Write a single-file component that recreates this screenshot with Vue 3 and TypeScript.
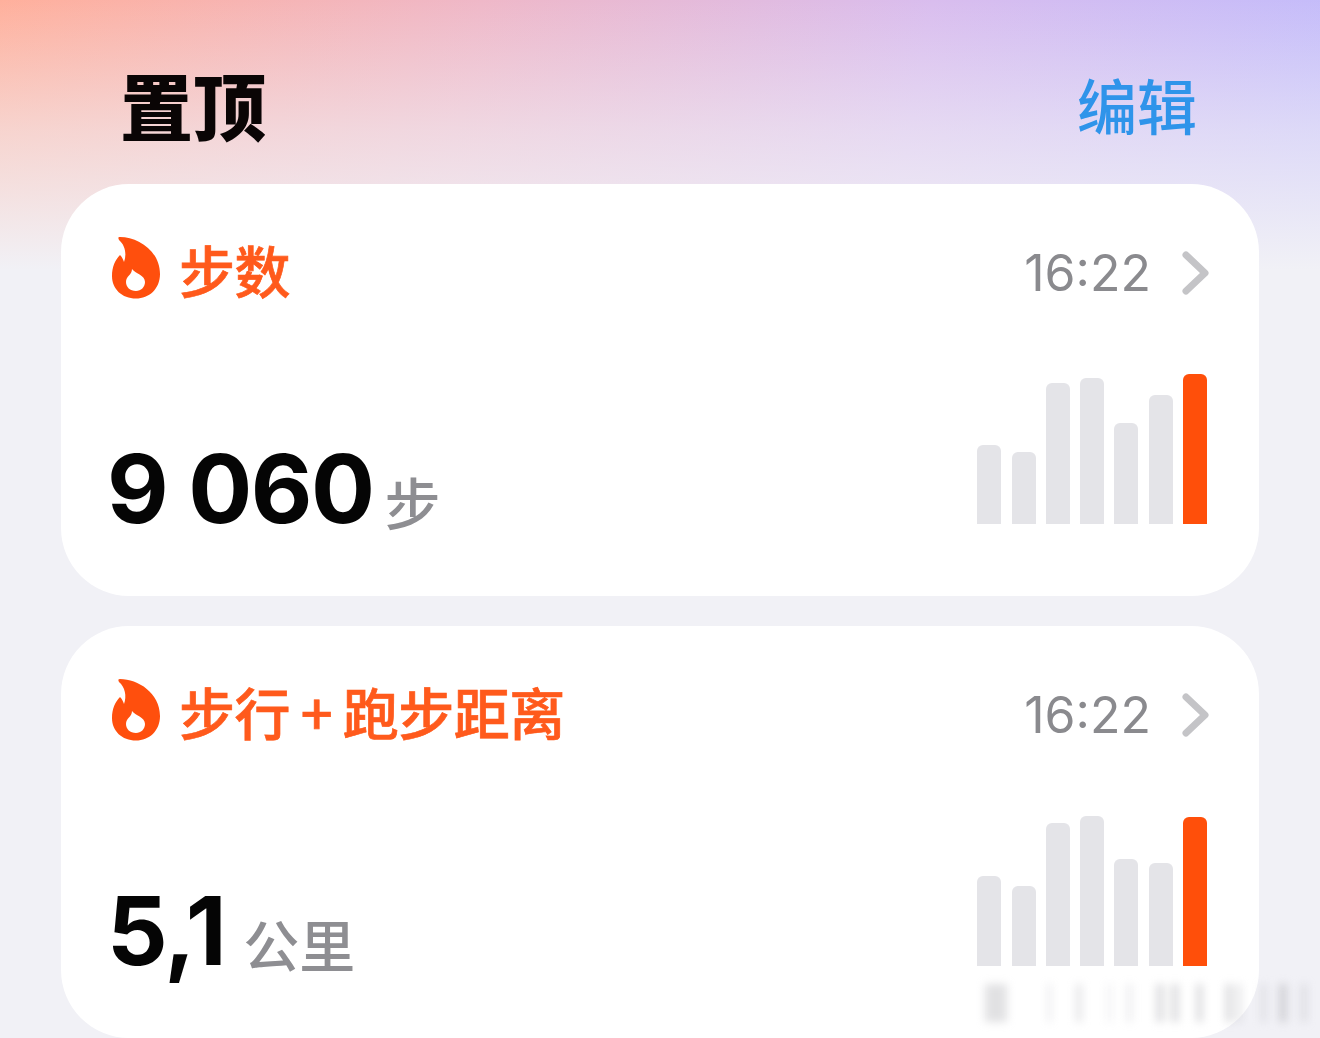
<template>
  <div class="page">
    <header class="top">
      <h1 class="title">置顶</h1>
      <span class="edit">编辑</span>
    </header>

    <section v-for="card in cards" :key="card.name" class="card">
      <div class="card-head">
        <svg class="flame" viewBox="0 0 48 62" aria-hidden="true">
          <path
            fill="#ff4f0d"
            fill-rule="evenodd"
            d="M8 0C26 0 48 14 48 37C48 52 37 61.500 24 61.500C10 61.500 0 52 0 39C0 30 3 23 8 18C10 20 11 22 12 25C15 17 13 8 7 3C6 1 6 0 8 0ZM20 32C24 37 33 38 33 45C33 50 29 54 24 54C18 54 14 50 14 45C14 39 20 38 20 32Z"
          />
        </svg>
        <span class="name">{{ card.name }}</span>
        <span class="time">16:22</span>
        <svg class="chevron" viewBox="0 0 28 44" aria-hidden="true">
          <path d="M4 4L23 22L4 40" fill="none" stroke="#c4c4c7" stroke-width="7" stroke-linecap="round" stroke-linejoin="round" />
        </svg>
      </div>
      <div class="card-body">
        <div class="reading">
          <span class="value">{{ card.value }}</span>
          <span class="unit" :style="{ marginLeft: card.unitGap + 'px' }">{{ card.unit }}</span>
        </div>
        <div class="bars">
          <div
            v-for="(h, i) in card.bars"
            :key="i"
            class="bar"
            :class="{ current: i === card.bars.length - 1 }"
            :style="{ height: h + 'px' }"
          ></div>
        </div>
      </div>
    </section>

    <div class="watermark" aria-hidden="true">
      <i
        v-for="s in smudges"
        :key="s.x"
        :style="{ left: s.x + 'px', width: s.w + 'px', opacity: s.o }"
      ></i>
    </div>
  </div>
</template>

<script setup lang="ts">
const cards = [
  { name: '步数', value: '9 060', unit: '步', unitGap: 11, bars: [79, 72, 141, 146, 101, 129, 150] },
  { name: '步行\u2009+\u2009跑步距离', value: '5,1', unit: '公里', unitGap: 18, bars: [90, 80, 143, 150, 107, 103, 149] }
]

// blurred watermark streaks along the bottom edge
const smudges = [
  { x: 0, w: 22, o: 0.45 },
  { x: 62, w: 5, o: 0.25 },
  { x: 91, w: 6, o: 0.4 },
  { x: 122, w: 5, o: 0.2 },
  { x: 142, w: 5, o: 0.3 },
  { x: 171, w: 8, o: 0.5 },
  { x: 186, w: 8, o: 0.5 },
  { x: 211, w: 7, o: 0.5 },
  { x: 241, w: 6, o: 0.6 },
  { x: 252, w: 4, o: 0.5 },
  { x: 276, w: 5, o: 0.4 },
  { x: 294, w: 8, o: 0.6 },
  { x: 316, w: 6, o: 0.4 }
]
</script>

<style>
html,
body {
  margin: 0;
  background: #f1f1f6;
}
</style>

<style scoped>
.page {
  position: relative;
  width: 1320px;
  height: 1038px;
  overflow: hidden;
  box-sizing: border-box;
  padding: 0 61px;
  font-family: "Noto Sans CJK SC", "Noto Sans", sans-serif;
  background:
    linear-gradient(to bottom, rgba(241, 241, 246, 0) 0, rgba(241, 241, 246, 0.55) 130px, #f1f1f6 270px),
    linear-gradient(100deg, #ffb09c 0%, #efb8c8 32%, #d9bdee 62%, #bcbcff 100%);
}

.top {
  height: 184px;
  display: flex;
  align-items: flex-start;
  justify-content: space-between;
  padding: 0 62px 0 59px;
  box-sizing: border-box;
}

.title {
  margin: 51px 0 0;
  font-size: 73px;
  line-height: 104px;
  font-weight: 900;
  color: #0a0505;
}

.edit {
  margin-top: 60px;
  font-size: 60px;
  line-height: 88px;
  font-weight: 500;
  color: #2f94ea;
}

.card {
  height: 412px;
  margin-bottom: 30px;
  background: #fff;
  border-radius: 68px;
  box-sizing: border-box;
  padding: 52px 49px 0 51px;
  display: flex;
  flex-direction: column;
}

.card-head {
  display: flex;
  align-items: center;
  height: 66px;
}

.flame {
  width: 48px;
  height: 62px;
  margin-top: -2px;
  flex: none;
}

.name {
  margin-left: 19px;
  font-size: 56px;
  line-height: 66px;
  font-weight: 500;
  letter-spacing: -0.5px;
  -webkit-text-stroke: 0.7px #ff5a1c;
  color: #ff5a1c;
}

.time {
  margin-left: auto;
  margin-top: 8px;
  font-family: Inter, "Liberation Sans", sans-serif;
  font-size: 50px;
  line-height: 66px;
  color: #8a8a8e;
}

.chevron {
  width: 28px;
  height: 44px;
  margin-left: 31px;
  margin-top: 8px;
  flex: none;
}

.card-body {
  display: flex;
  justify-content: space-between;
  align-items: flex-end;
  height: 222px;
  padding-right: 3px;
}

.reading {
  display: flex;
  align-items: baseline;
  margin-bottom: -21px;
  margin-left: -5px;
}

.value {
  font-family: Inter, "Liberation Sans", sans-serif;
  font-size: 95px;
  line-height: 112px;
  font-weight: 650;
  letter-spacing: -1.5px;
  color: #050505;
}

.unit {
  align-self: flex-end;
  margin-bottom: 14px;
  font-size: 56px;
  line-height: 60px;
  font-weight: 500;
  color: #8e8e92;
}

.bars {
  display: flex;
  align-items: flex-end;
  gap: 10.3px;
}

.bar {
  width: 24px;
  background: #e4e4e8;
  border-radius: 6px 6px 0 0;
}

.bar.current {
  background: #ff4f0a;
}

.watermark {
  position: absolute;
  left: 985px;
  top: 984px;
  width: 325px;
  height: 38px;
  filter: blur(4px);
}

.watermark i {
  position: absolute;
  top: 0;
  bottom: 0;
  display: block;
  background: #bdbdc2;
}
</style>
